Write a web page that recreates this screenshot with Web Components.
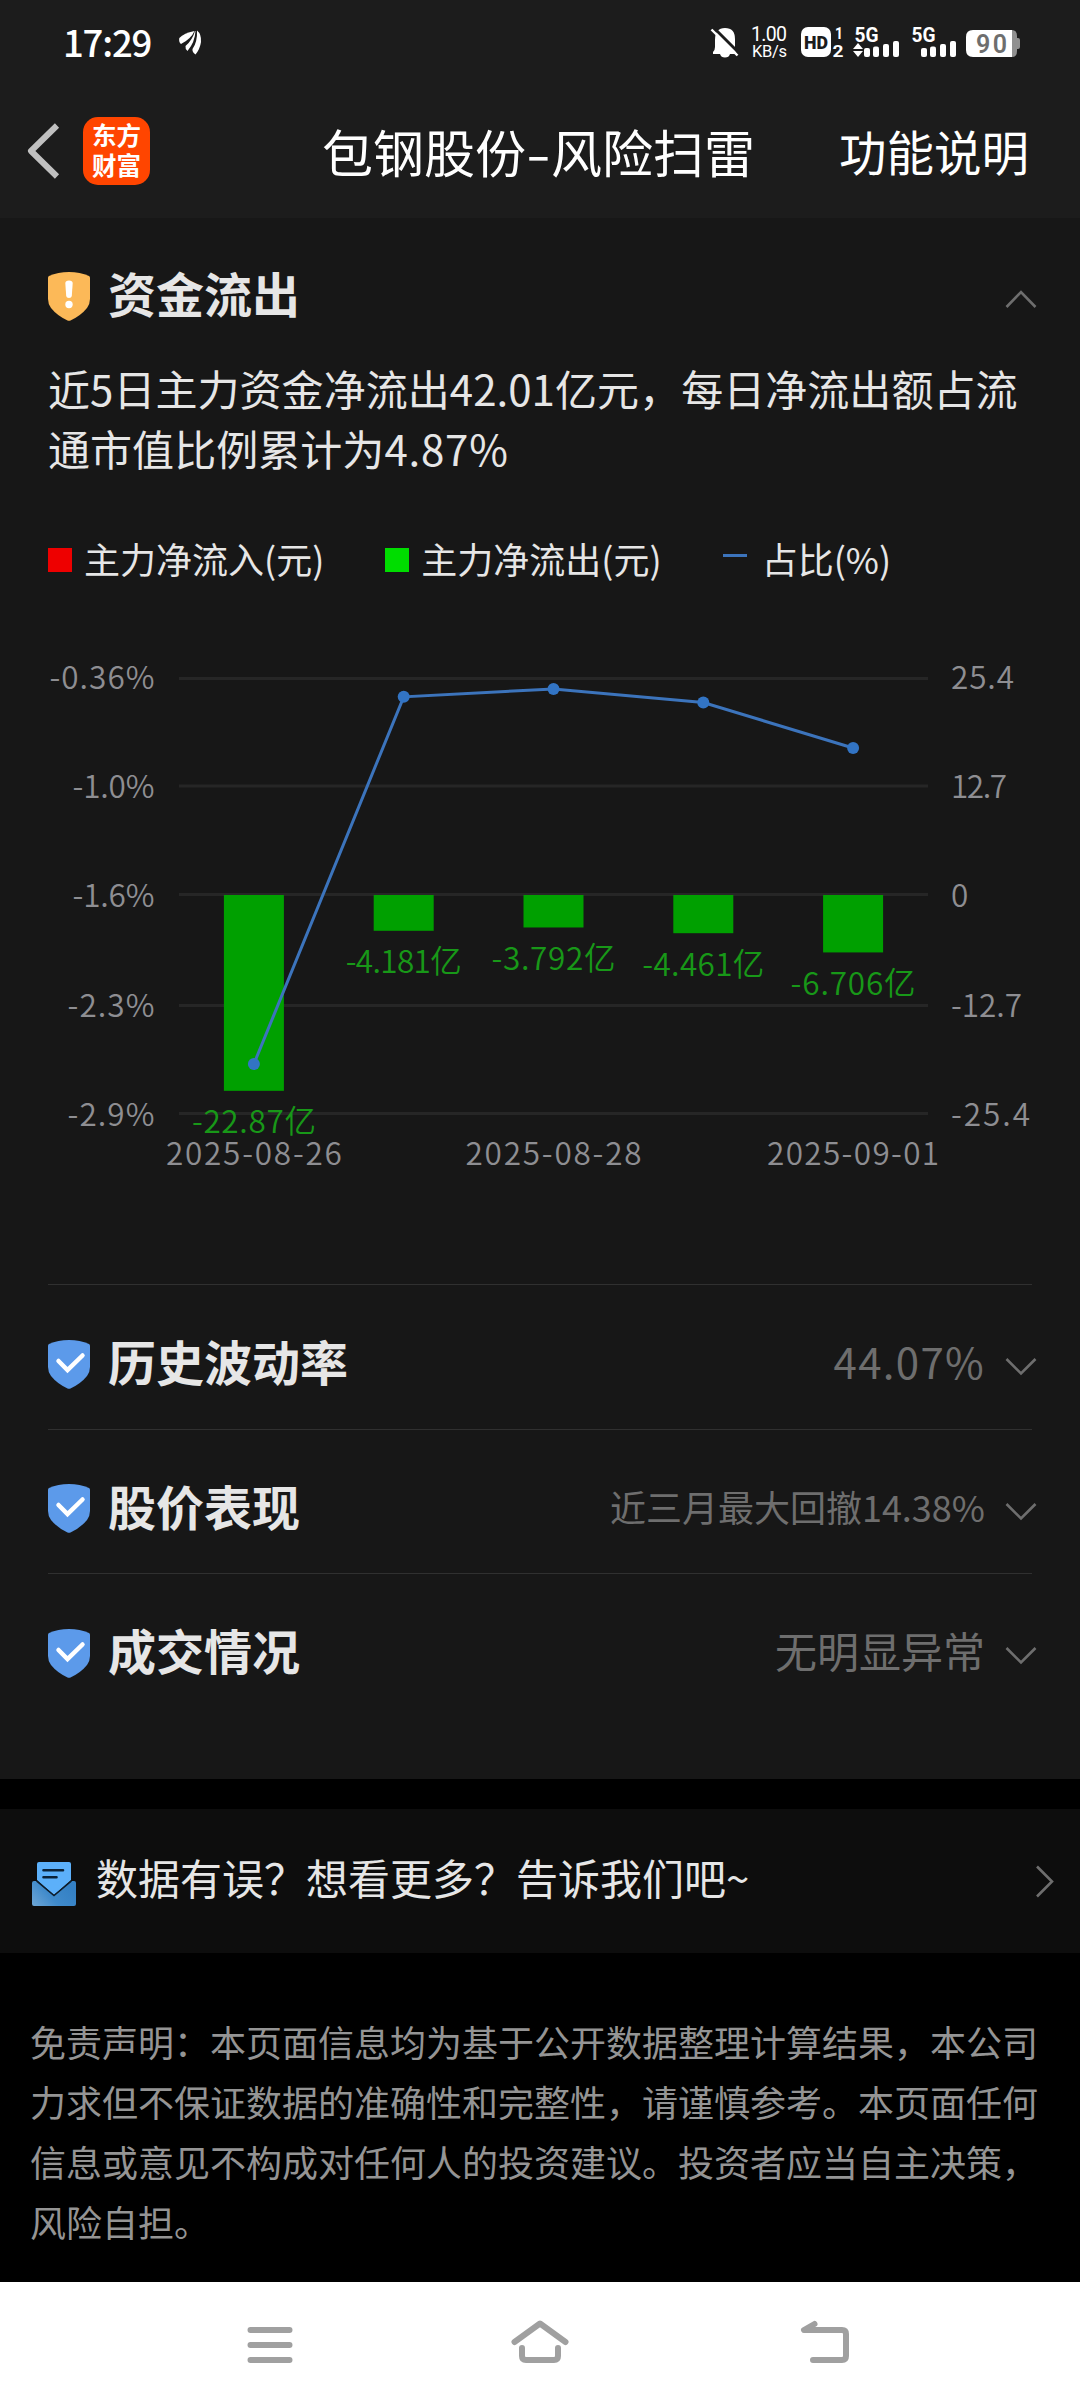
<!DOCTYPE html>
<html lang="zh-CN">
<head>
<meta charset="utf-8">
<title>包钢股份-风险扫雷</title>
<style>
  body {
    margin: 0;
    width: 1080px;
    background: #000;
    color: #e6e6e6;
    font-family: "Noto Sans CJK SC", sans-serif;
  }
</style>
</head>
<body>
<risk-page></risk-page>

<script>
class StatusBar extends HTMLElement {
  constructor() {
    super();
    this.attachShadow({ mode: "open" });
    this.shadowRoot.innerHTML = `
      <style>
        :host {
          display: flex;
          height: 84px;
          box-sizing: border-box;
          padding: 0 60px 0 63px;
          justify-content: space-between;
          color: #fff;
        }
        .left { display: flex; }
        .time {
          font: 500 36.500px/38px "Noto Sans CJK SC", sans-serif;
          letter-spacing: -1.200px;
          margin-top: 23px;
          width: 115px;
        }
        svg { display: block; fill: #fff; }
        text { font-family: Roboto, sans-serif; }
      </style>
      <div class="left">
        <span class="time">17:29</span>
        <svg width="24" height="84" viewBox="178 0 24 84">
          <path d="M179.3 38 Q184 33 194.500 31 Q191 39 181 44 Q178.500 42 179.300 38Z"/>
          <path d="M195.500 31 Q195 42 187.500 51 Q185 49 185.500 46 Q192.500 40 195 31Z"/>
          <path d="M197 30.500 Q201.500 34 201 42 Q200 49 195.500 54.500 Q192 52 192.500 49 Q197.500 42 197 30.500Z"/>
        </svg>
      </div>
      <svg width="312" height="84" viewBox="708 0 312 84">
        <path d="M713 54 V52 Q715 50 715 47 V40 Q715 28 725 28 Q735 28 735 39 V48 Q735 51 737 54 H730 Q729 57.500 725 57.500 Q721 57.500 720 54Z"/>
        <path d="M713 27 L739 53" stroke="#1c1c1c" stroke-width="3"/>
        <path d="M711.500 29.500 L737.500 55.500" stroke="#fff" stroke-width="2.400"/>
        <text x="751" y="41" font-size="19.500" textLength="36">1.00</text>
        <text x="752" y="57" font-size="16.500" textLength="35">KB/s</text>
        <rect x="801" y="27" width="30" height="30" rx="7"/>
        <text x="804" y="48.500" font-size="18.500" font-weight="900" fill="#1c1c1c" textLength="24" lengthAdjust="spacingAndGlyphs">HD</text>
        <text x="835" y="39" font-size="16.500" font-weight="700" textLength="8" lengthAdjust="spacingAndGlyphs">1</text>
        <text x="832.500" y="56.500" font-size="16.500" font-weight="700" textLength="11" lengthAdjust="spacingAndGlyphs">2</text>
        <text x="854.500" y="41.500" font-size="20" font-weight="700" textLength="24" lengthAdjust="spacingAndGlyphs">5G</text>
        <path d="M853 49 L858 43 L863 49Z M853 51 L858 57 L863 51Z"/>
        <g id="bars">
          <rect x="864" y="48" width="6" height="9" rx="2"/>
          <rect x="873" y="46.500" width="6" height="10.500" rx="2"/>
          <rect x="883" y="44" width="6" height="13" rx="2"/>
          <rect x="893" y="41" width="6" height="16" rx="2"/>
        </g>
        <text x="911.500" y="41.500" font-size="20" font-weight="700" textLength="24" lengthAdjust="spacingAndGlyphs">5G</text>
        <use href="#bars" x="57"/>
        <path d="M1010 30 H1012 Q1017 30 1017 36 V38 H1018 Q1020 38 1020 40 V47 Q1020 49 1018 49 H1017 V51 Q1017 57 1012 57 H1010Z" fill="#909090"/>
        <path d="M973 30 H1012 V57 H973 Q966 57 966 50 V37 Q966 30 973 30Z"/>
        <text x="976" y="52.500" font-size="25" font-weight="600" fill="#6e6e6e" textLength="31">90</text>
      </svg>
    `;
  }
}

customElements.define("status-bar", StatusBar);

class TitleBar extends HTMLElement {
  constructor() {
    super();
    this.attachShadow({ mode: "open" });
    this.shadowRoot.innerHTML = `
      <style>
        :host {
          display: grid;
          grid-template-columns: 1fr auto 1fr;
          align-items: center;
          height: 134px;
          color: #fff;
        }
        .back {
          display: flex;
          align-items: center;
          gap: 23px;
          padding-left: 24px;
        }
        .logo {
          width: 67px;
          height: 68px;
          border-radius: 15px;
          background: #ff4500;
          text-align: center;
          font-size: 24.500px;
          font-weight: 700;
          line-height: 29.500px;
          padding-top: 3px;
          box-sizing: border-box;
        }
        .title {
          font-size: 51px;
          line-height: 60px;
          margin-top: -1px;
          margin-right: 3px;
        }
        .title i {
          font-style: normal;
          display: inline-block;
          width: 25px;
          text-align: center;
          transform: scaleX(1.4);
        }
        .action {
          font-size: 47.500px;
          line-height: 60px;
          text-align: right;
          padding-right: 51px;
          margin-top: -1px;
        }
      </style>
      <div class="back">
        <svg width="36" height="60" viewBox="0 0 36 60" fill="none" stroke="#c0c0c0" stroke-width="6" stroke-linejoin="round">
          <path d="M33 4.500 L7 30 L33 55.500"/>
        </svg>
        <div class="logo">东方<br>财富</div>
      </div>
      <div class="title">包钢股份<i>-</i>风险扫雷</div>
      <div class="action"><slot></slot></div>
    `;
  }
}

customElements.define("title-bar", TitleBar);

class RiskShield extends HTMLElement {
  constructor() {
    super();
    this.attachShadow({ mode: "open" });
    const warn = this.getAttribute("level") === "warn";
    const mark = warn
      ? `<path d="M17.300 11 Q17.500 8.500 21 8.500 Q24.500 8.500 24.700 11 L23.800 24 Q23.500 26 21 26 Q18.500 26 18.200 24Z" fill="#fff"/>
         <circle cx="21" cy="32.500" r="3.700" fill="#fff"/>`
      : `<path d="M10.500 21 L19.500 30 L34.500 15.500" fill="none" stroke="#fff" stroke-width="4.500" stroke-linecap="round"/>`;
    this.shadowRoot.innerHTML = `
      <style>
        :host { display: block; width: 42px; height: 49px; }
        svg { display: block; }
      </style>
      <svg width="42" height="49" viewBox="0 0 42 49">
        <path d="M0 5.500 Q0 4.500 1 4 Q10 0 21 0 Q32 0 41 4 Q42 4.500 42 5.500 V27 Q42 32 39 36 Q33 43.500 22.500 48.500 Q21 49 19.500 48.500 Q9 43.500 3 36 Q0 32 0 27Z" fill="${warn ? "#fcb958" : "#5c9aea"}"/>
        ${mark}
      </svg>
    `;
  }
}

customElements.define("risk-shield", RiskShield);

class RiskItem extends HTMLElement {
  constructor() {
    super();
    this.attachShadow({ mode: "open" });
    const open = this.hasAttribute("open");
    this.shadowRoot.innerHTML = `
      <style>
        :host {
          display: flex;
          align-items: center;
          box-sizing: border-box;
          height: 144.500px;
          padding-top: 15px;
          border-top: 1.500px solid #303030;
        }
        :host([open]) {
          height: 140px;
          padding-top: 16px;
          border-top: none;
        }
        h2 {
          flex: 1;
          margin: -8px 0 0 18px;
          font-size: 48px;
          line-height: 60px;
          font-weight: 700;
        }
        .value {
          color: #6e6e6e;
          font-size: var(--value-size, 42px);
          letter-spacing: var(--value-spacing, 0);
          line-height: 60px;
          margin: -6px 20px 0 0;
        }
        svg { display: block; margin: 6px -5px 0 0; }
      </style>
      <risk-shield level="${open ? "warn" : "ok"}"></risk-shield>
      <h2>${this.getAttribute("name")}</h2>
      <span class="value"><slot></slot></span>
      <svg width="32" height="20" viewBox="0 0 32 20" fill="none" stroke="#6e6e6e" stroke-width="2.600">
        <path d="${open ? "M1.500 18 L16 3 L30.500 18" : "M1.500 2 L16 16.500 L30.500 2"}"/>
      </svg>
    `;
  }
}

customElements.define("risk-item", RiskItem);

class ChartLegend extends HTMLElement {
  constructor() {
    super();
    this.attachShadow({ mode: "open" });
    this.shadowRoot.innerHTML = `
      <style>
        :host {
          display: flex;
          align-items: center;
          height: 60px;
          font-size: 36px;
          line-height: 60px;
        }
        .item { display: flex; align-items: center; }
        .item + .item { margin-left: 61px; }
        .text { margin: -5px 0 0 12px; }
        .box { width: 24px; height: 24px; }
        .line { width: 24px; height: 3px; background: #3c74bc; margin: -10px 3px 0 0; }
      </style>
      <div class="item"><span class="box" style="background:#ee0000"></span><span class="text">主力净流入(元)</span></div>
      <div class="item"><span class="box" style="background:#00dd00"></span><span class="text">主力净流出(元)</span></div>
      <div class="item"><span class="line"></span><span class="text">占比(%)</span></div>
    `;
  }
}

customElements.define("chart-legend", ChartLegend);

const FLOW = [
  { date: "2025-08-26", value: -22.87, label: "-22.87亿", ratio: -2.611, width: 124 },
  { date: "", value: -4.181, label: "-4.181亿", ratio: -0.467, width: 116 },
  { date: "2025-08-28", value: -3.792, label: "-3.792亿", ratio: -0.421, width: 124 },
  { date: "", value: -4.461, label: "-4.461亿", ratio: -0.5, width: 122 },
  { date: "2025-09-01", value: -6.706, label: "-6.706亿", ratio: -0.766, width: 125 },
];

class FlowChart extends HTMLElement {
  constructor() {
    super();
    this.attachShadow({ mode: "open" });
    this.shadowRoot.innerHTML = `
      <style>
        :host { display: block; height: 694px; margin: 0 -48px; }
        svg { display: block; font-family: "Noto Sans CJK SC", sans-serif; font-size: 31.500px; font-weight: 350; }
        .axis { fill: #8e8e92; }
        .flow { fill: #189818; }
      </style>
      <svg width="1080" height="694"></svg>
    `;
    this.render();
  }

  render() {
    const left = 179;
    const width = 749;
    const top = 88.5;
    const height = 435;
    const zero = top + height / 2;
    const grid = [88.5, 196, 304.5, 415.5, 523.5];
    const x = (i) => left + (width * (i + 0.5)) / FLOW.length;
    const ratioY = (r) => top + ((-0.36 - r) / 2.54) * height;
    const ratioLabels = [["-0.36%", 105], ["-1.0%", 82], ["-1.6%", 82], ["-2.3%", 87], ["-2.9%", 87]];
    const flowLabels = [["25.4", 63], ["12.7", 56], ["0", 18], ["-12.7", 71], ["-25.4", 79]];
    const labelY = [98.5, 207.5, 317, 426.5, 535.5];
    let out = "";

    grid.forEach((y, i) => {
      out += `<path d="M${left} ${y} H${left + width}" stroke="#262626" stroke-width="3"/>`;
      out += `<text class="axis" x="${154.5 - ratioLabels[i][1]}" y="${labelY[i]}" textLength="${ratioLabels[i][1]}">${ratioLabels[i][0]}</text>`;
      out += `<text class="axis" x="951" y="${labelY[i]}" textLength="${flowLabels[i][1]}">${flowLabels[i][0]}</text>`;
    });

    FLOW.forEach((d, i) => {
      const h = (-d.value / 25.4) * (height / 2);
      out += `<rect x="${x(i) - 30}" y="${zero - 1}" width="60" height="${h}" fill="#00a000"/>`;
      out += `<text class="flow" x="${x(i) - d.width / 2}" y="${zero + h + 41.5}" textLength="${d.width}">${d.label}</text>`;
      if (d.date) {
        const dateWidth = d.date.endsWith("1") ? 172 : 176;
        out += `<text class="axis" x="${x(i) - dateWidth / 2}" y="574.500" textLength="${dateWidth}">${d.date}</text>`;
      }
    });

    const points = FLOW.map((d, i) => `${x(i)},${ratioY(d.ratio)}`).join(" ");
    out += `<polyline points="${points}" fill="none" stroke="#3c74bc" stroke-width="3"/>`;
    FLOW.forEach((d, i) => {
      out += `<circle cx="${x(i)}" cy="${ratioY(d.ratio)}" r="6" fill="#3274c4"/>`;
    });

    this.shadowRoot.querySelector("svg").innerHTML = out;
  }
}

customElements.define("flow-chart", FlowChart);

class FeedbackRow extends HTMLElement {
  constructor() {
    super();
    this.attachShadow({ mode: "open" });
    this.shadowRoot.innerHTML = `
      <style>
        :host {
          display: flex;
          align-items: center;
          height: 144px;
          margin-top: 30px;
          padding: 0 25px 0 32px;
          background: #0d0d0d;
        }
        .text { flex: 1; margin: -8px 0 0 20px; font-size: 42px; line-height: 60px; }
        .mail { margin-top: 5px; }
      </style>
      <svg class="mail" width="44" height="46" viewBox="0 0 44 46">
        <defs>
          <linearGradient id="env" x1="0" y1="1" x2="1" y2="0.500">
            <stop offset="0" stop-color="#6ea6d6"/>
            <stop offset="0.500" stop-color="#3f8acb"/>
            <stop offset="1" stop-color="#3480c4"/>
          </linearGradient>
        </defs>
        <path d="M5 3 Q5 1 7 1 H37 Q39 1 39 3 V19 L22 34 L5 19Z" fill="#5cb0fa"/>
        <path d="M11.500 9.300 H31 M11.500 16.300 H24.500" stroke="#0b2238" stroke-width="2.600" stroke-linecap="round"/>
        <path d="M0 22 Q0 20 2 20 H4.500 L22 34.500 L39.500 20 H42 Q44 20 44 22 V43 Q44 45 42 45 H2 Q0 45 0 43Z" fill="url(#env)"/>
        <path d="M4.500 20 L22 34.500 L39.500 20" fill="none" stroke="#0d1d2c" stroke-width="1.500"/>
      </svg>
      <span class="text"><slot></slot></span>
      <svg width="20" height="34" viewBox="0 0 20 34" fill="none" stroke="#6e6e6e" stroke-width="2.600">
        <path d="M2 2.500 L17 17.500 L2 32.500"/>
      </svg>
    `;
  }
}

customElements.define("feedback-row", FeedbackRow);

class SystemNav extends HTMLElement {
  constructor() {
    super();
    this.attachShadow({ mode: "open" });
    this.shadowRoot.innerHTML = `
      <style>
        :host {
          display: grid;
          grid-template-columns: repeat(3, 60px);
          justify-content: center;
          column-gap: 217px;
          height: 126px;
          box-sizing: border-box;
          padding-top: 34px;
          background: #fff;
        }
        svg { fill: none; stroke: #a0a0a0; stroke-width: 6; stroke-linecap: round; stroke-linejoin: round; }
      </style>
      <svg width="60" height="54" viewBox="233 2316 60 54"><path d="M250.500 2330 H289.500 M250.500 2345 H289.500 M250.500 2360 H289.500"/></svg>
      <svg width="60" height="54" viewBox="510 2316 60 54"><path d="M514.500 2342 L540 2323.500 L565.500 2342 M522 2348 V2356 Q522 2360 526 2360 H554 Q558 2360 558 2356 V2348"/></svg>
      <svg width="64" height="54" viewBox="787 2316 64 54"><path d="M814.500 2324 L804 2330 H842 Q846 2330 846 2334 V2356 Q846 2360 842 2360 H813"/></svg>
    `;
  }
}

customElements.define("system-nav", SystemNav);

class RiskPage extends HTMLElement {
  constructor() {
    super();
    this.attachShadow({ mode: "open" });
    this.shadowRoot.innerHTML = `
      <style>
        :host { display: flex; flex-direction: column; height: 2408px; }
        header { background: #1c1c1c; }
        main { background: #171717; height: 1561px; padding: 0 48px; box-sizing: border-box; }
        .desc {
          margin: 0 0 52px;
          font-size: 42px;
          line-height: 60px;
          letter-spacing: 0.050px;
        }
        .num { letter-spacing: 0.800px; }
        .notice {
          flex: 1;
          margin: 0;
          padding: 58px 30px 0;
          color: #949494;
          font-size: 36px;
          line-height: 60px;
        }
      </style>
      <header>
        <status-bar></status-bar>
        <title-bar>功能说明</title-bar>
      </header>
      <main>
        <risk-item name="资金流出" open></risk-item>
        <p class="desc">近5日主力资金净流出42.01亿元，每日净流出额占流通市值比例累计为<span class="num">4.87%</span></p>
        <chart-legend></chart-legend>
        <flow-chart></flow-chart>
        <risk-item name="历史波动率" style="--value-spacing: 1.300px">44.07%</risk-item>
        <risk-item name="股价表现" style="--value-size: 36px">近三月最大回撤14.38%</risk-item>
        <risk-item name="成交情况">无明显异常</risk-item>
      </main>
      <feedback-row>数据有误？想看更多？告诉我们吧~</feedback-row>
      <p class="notice">免责声明：本页面信息均为基于公开数据整理计算结果，本公司力求但不保证数据的准确性和完整性，请谨慎参考。本页面任何信息或意见不构成对任何人的投资建议。投资者应当自主决策，风险自担。</p>
      <system-nav></system-nav>
    `;
  }
}

customElements.define("risk-page", RiskPage);
</script>
</body>
</html>
